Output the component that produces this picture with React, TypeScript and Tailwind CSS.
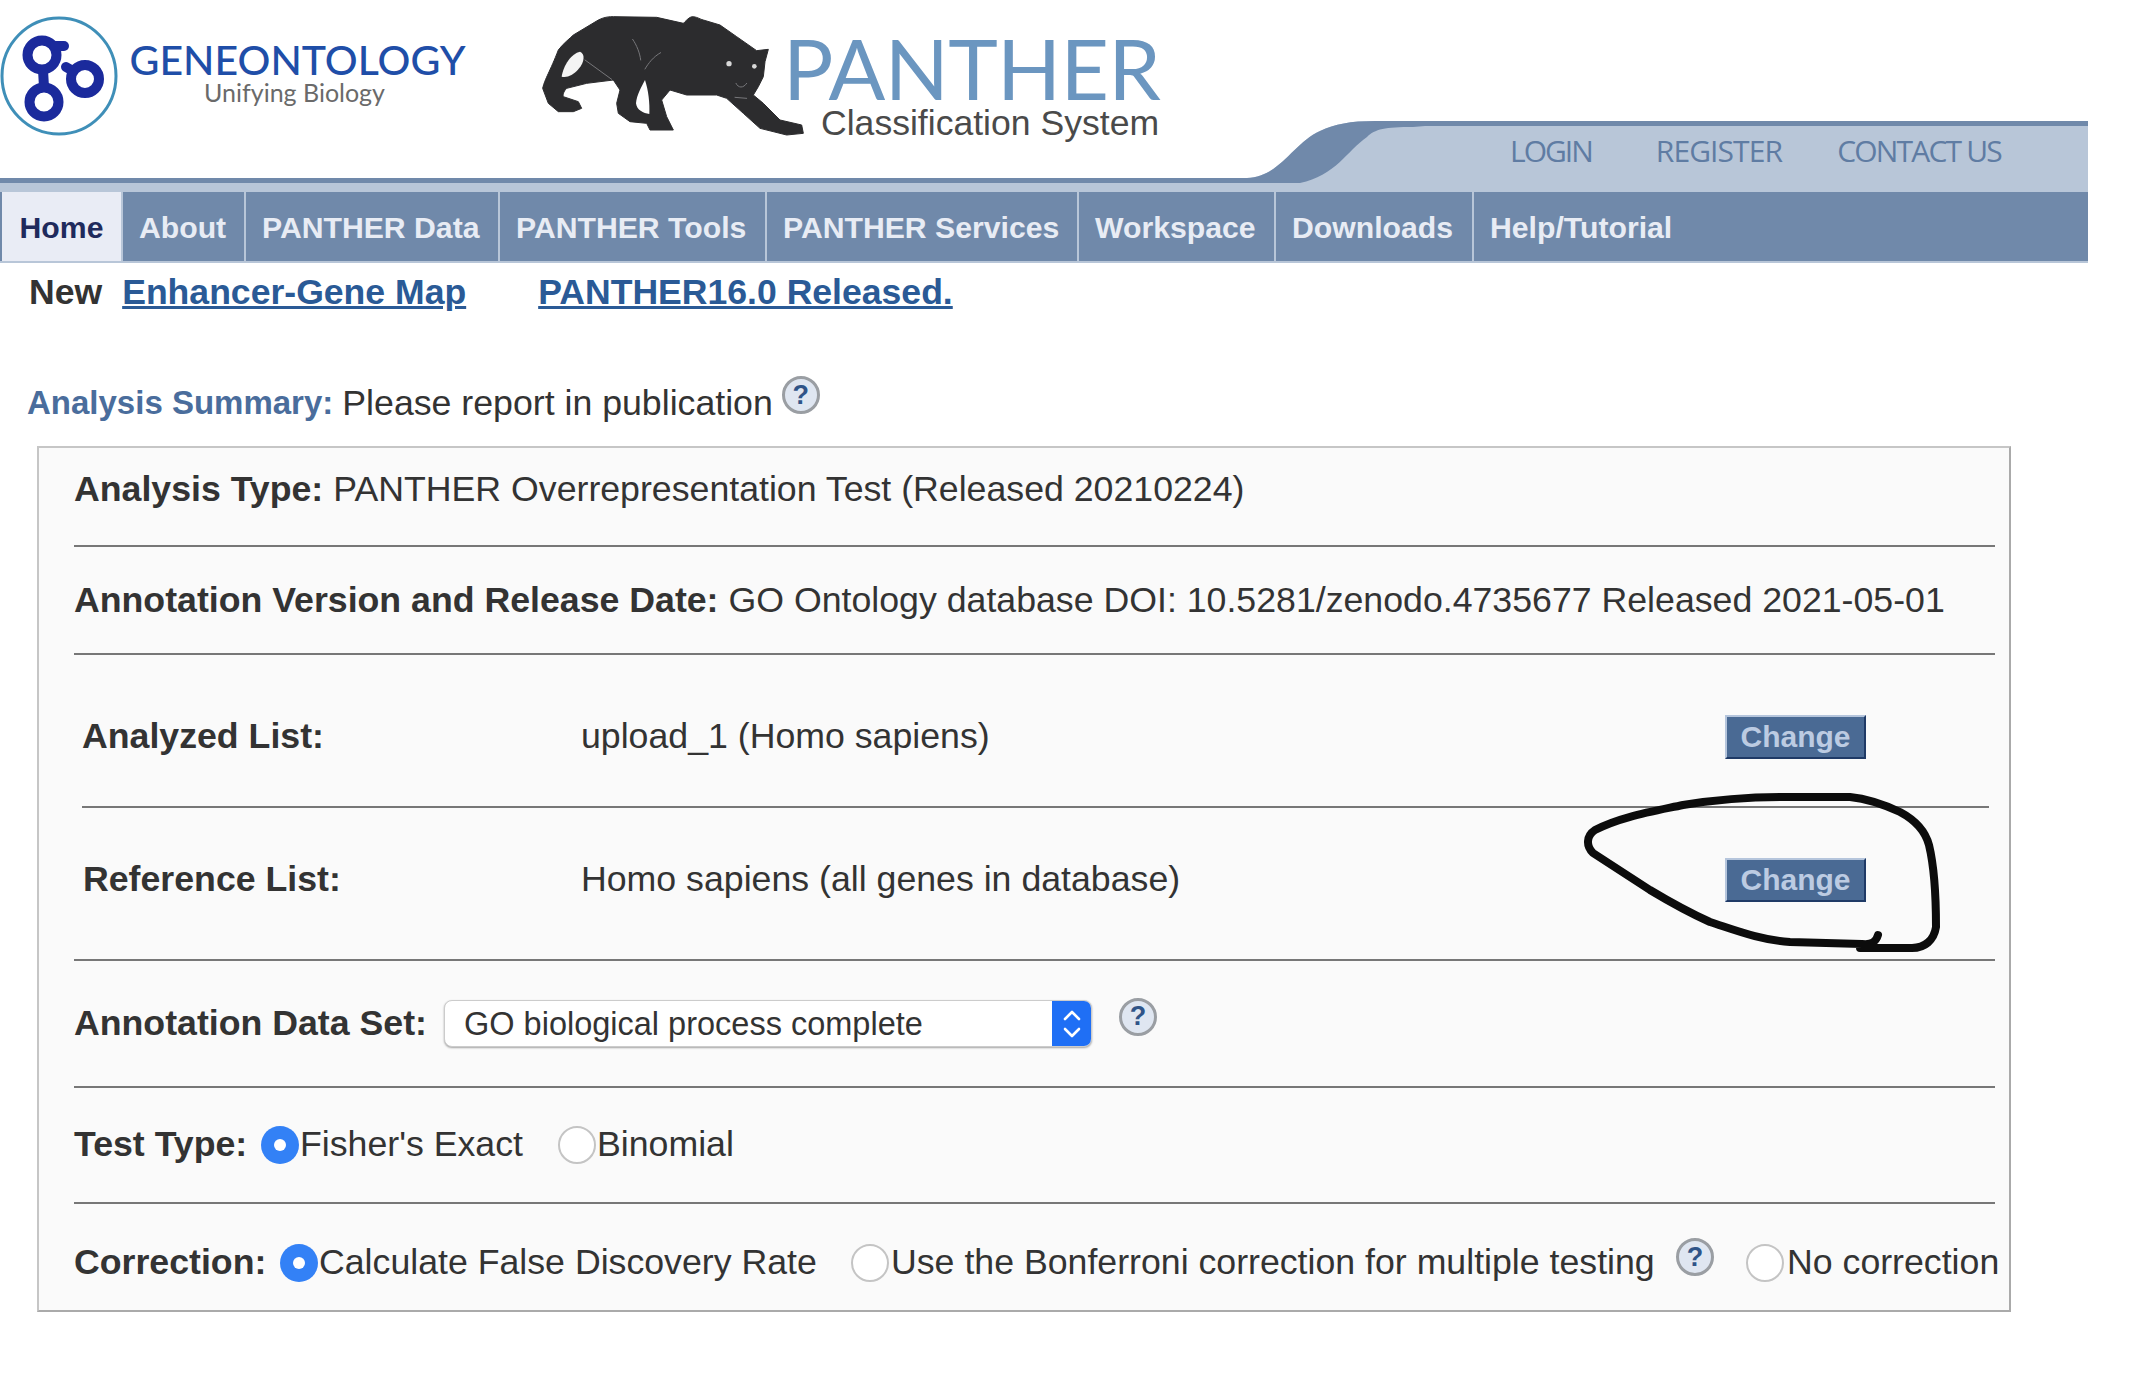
import React from 'react';

const navItems = [
  { label: 'About', w: 'w-[123px]' },
  { label: 'PANTHER Data', w: 'w-[254px]' },
  { label: 'PANTHER Tools', w: 'w-[267px]' },
  { label: 'PANTHER Services', w: 'w-[312px]' },
  { label: 'Workspace', w: 'w-[197px]' },
  { label: 'Downloads', w: 'w-[198px]' },
];

function GoLogo() {
  return (
    <svg viewBox="0 0 120 140" className="w-[120px] h-[140px] shrink-0">
      <ellipse cx="59" cy="76" rx="57" ry="58" fill="white" stroke="#3f8fb8" strokeWidth="3" />
      <g fill="none" stroke="#1b2a9c" strokeWidth="10" strokeLinecap="round">
        <circle cx="42" cy="55" r="14.5" />
        <circle cx="44" cy="102" r="14.5" />
        <circle cx="85" cy="79" r="14" />
        <path d="M43 70 L44 87" />
        <path d="M55 46 L64 46" />
        <path d="M66 67 L73 71" />
      </g>
    </svg>
  );
}

function PantherMark() {
  return (
    <svg viewBox="0 0 900 450" className="w-[300px] h-[150px] shrink-0">
      <path
        d="M38 265 C45 235 60 215 85 150 C100 130 120 115 130 105 L205 60 C225 50 240 50 250 50 L380 52 L460 70 C475 55 480 50 490 50 C505 52 510 58 520 60 L570 75 L620 110 L680 152 L715 148 L705 185 L700 230 L685 260 L670 285 L700 310 L750 360 L815 375 L820 400 L770 405 L690 385 L640 340 L590 295 L560 285 L470 285 L420 270 L395 300 L410 350 L430 390 L360 390 L350 370 L300 365 L265 340 L260 310 L270 270 L250 240 L170 250 L110 265 C100 275 98 285 100 290 L145 305 L155 325 L130 335 L85 335 L55 310 Z"
        fill="#2c2c2e"
        stroke="#2c2c2e"
        strokeWidth="3"
        strokeLinejoin="round"
      />
      <path d="M95 230 C100 195 125 160 150 155 C165 160 165 185 145 208 C130 225 110 235 95 230 Z" fill="#f4f4f4" />
      <path d="M345 240 C355 270 360 310 358 342 C340 340 320 330 318 310 C320 285 335 260 345 240 Z" fill="#fff" />
      <g fill="none" stroke="#77777a" strokeWidth="3" strokeLinecap="round">
        <path d="M165 180 L245 238" />
        <path d="M308 118 C320 135 330 160 332 180" />
        <path d="M392 158 C370 170 355 190 345 207" />
        <path d="M618 250 C625 265 640 265 650 250" />
        <path d="M615 292 L650 295" />
      </g>
      <circle cx="597" cy="191" r="8" fill="#d8d8d8" />
      <circle cx="673" cy="199" r="7" fill="#d8d8d8" />
    </svg>
  );
}

function Swoosh() {
  return (
    <svg viewBox="0 0 190 71" preserveAspectRatio="none" className="w-[190px] h-[71px] shrink-0 block">
      <path d="M0 57 L12 57 C45 56 58 22 85 10 C100 3 115 0 140 0 L190 0 L190 71 L0 71 Z" fill="#b8c6d8" />
      <path
        d="M0 57 L12 57 C45 56 58 22 85 10 C100 3 115 0 140 0 L190 0 L190 5 L178 6 C150 6 140 8 132 16 C112 30 100 55 65 62 L0 62 Z"
        fill="#7089aa"
      />
    </svg>
  );
}

function HelpIcon({ className = '' }: { className?: string }) {
  return (
    <span
      className={`flex items-center justify-center w-[38px] h-[38px] shrink-0 rounded-full border-[3px] border-[#9a9ea3] bg-[#dfe6f1] text-[#2f5488] text-[27px] font-bold leading-none ${className}`}
    >
      ?
    </span>
  );
}

function Radio({ checked = false }: { checked?: boolean }) {
  if (checked) {
    return (
      <span className="flex items-center justify-center w-[38px] h-[38px] shrink-0 rounded-full bg-[#3381f6]">
        <span className="w-[12px] h-[12px] rounded-full bg-white" />
      </span>
    );
  }
  return <span className="block w-[38px] h-[38px] shrink-0 rounded-full border-2 border-[#c4c4c4] bg-white" />;
}

function ChangeButton() {
  return (
    <button className="w-[141px] h-[44px] flex items-center justify-center bg-[#4a6a94] border-2 border-t-[#b5c5dc] border-l-[#b5c5dc] border-r-[#1f3a66] border-b-[#1f3a66] text-[#bccbe2] text-[30px] font-bold">
      Change
    </button>
  );
}

export default function App() {
  return (
    <div className="relative w-full h-[1373px] overflow-hidden bg-white text-[#333] font-['Liberation_Sans',Arial,sans-serif]">
      {/* header */}
      <div className="flex w-[2088px] h-[192px]">
        <div className="w-[1235px] shrink-0 flex flex-col">
          <div className="h-[178px] flex items-start">
            <GoLogo />
            <div className="ml-[9px] w-[337px] pt-[37px] flex flex-col items-center">
              <div className="text-[41px] leading-[46px] font-medium text-[#1f4ea8] font-['Lato',sans-serif]">GENEONTOLOGY</div>
              <div className="ml-[-6px] mt-[-6px] text-[25px] leading-[30px] text-[#6a6a6a] font-['Lato',sans-serif]">Unifying Biology</div>
            </div>
            <div className="ml-[64px]">
              <PantherMark />
            </div>
            <div className="ml-[-47px] pt-[32px] w-[380px]">
              <div className="text-[84px] leading-[72px] tracking-[-0.7px] text-[#6b96c0] font-['Lato',sans-serif]">PANTHER</div>
              <div className="ml-[38px] mt-[-1px] text-[35.6px] leading-[40px] text-[#4a4a4a]">Classification System</div>
            </div>
          </div>
          <div className="h-[5px] bg-[#7089aa]" />
          <div className="h-[9px] bg-[#b8c6d8]" />
        </div>
        <div className="self-end">
          <Swoosh />
        </div>
        <div className="flex-1 mt-[121px] bg-[#b8c6d8] border-t-[5px] border-[#7089aa] flex items-start">
          <div className="mt-[5px] ml-[85px] flex text-[30px] leading-[40px] text-[#5f7ca3] font-['Open_Sans',sans-serif]">
            <span className="tracking-[-2px]">LOGIN</span>
            <span className="ml-[64px] tracking-[-0.9px]">REGISTER</span>
            <span className="ml-[55px] tracking-[-1.8px]">CONTACT US</span>
          </div>
        </div>
      </div>

      {/* nav */}
      <div className="flex w-[2088px] h-[71px] pl-[2px] bg-[#7089aa] border-b-2 border-[#b8c6d8] text-[30.2px] font-bold">
        <div className="w-[119px] pt-[2px] flex items-center justify-center bg-[#e9ecf5] text-[#1f2a5c]">Home</div>
        {navItems.map((item) => (
          <div key={item.label} className={`${item.w} pl-[16px] pt-[2px] flex items-center text-[#e8ecf4] border-l-2 border-[#b8c6d8]`}>
            {item.label}
          </div>
        ))}
        <div className="pl-[16px] pt-[2px] flex items-center text-[#e8ecf4] border-l-2 border-[#b8c6d8]">Help/Tutorial</div>
      </div>

      {/* news */}
      <div className="flex pl-[29px] pt-[9px] text-[35.6px] leading-[40px] font-bold">
        <span>New</span>
        <a className="ml-[20px] text-[#2a5a96] underline">Enhancer-Gene Map</a>
        <a className="ml-[72px] text-[#2a5a96] underline">PANTHER16.0 Released.</a>
      </div>

      {/* summary */}
      <div className="flex items-start pl-[27px] mt-[69px] h-[46px] text-[35.7px] leading-[44px]">
        <span className="font-bold text-[33px] text-[#4a6d9c] mr-[9px]">Analysis Summary:</span>
        <span>Please report in publication</span>
        <HelpIcon className="ml-[9px] mt-[-5px]" />
      </div>

      {/* panel */}
      <div className="ml-[37px] mt-[19px] w-[1974px] h-[866px] pl-[35px] pr-[14px] bg-[#fafafa] border-2 border-[#c6c6c6] border-r-[#aaa] border-b-[#aaa] text-[35.7px]">
        <div className="h-[99px] pb-[13px] flex items-center border-b-2 border-[#777]">
          <span className="font-bold mr-[10px]">Analysis Type:</span>
          PANTHER Overrepresentation Test (Released 20210224)
        </div>
        <div className="h-[108px] pt-[1px] flex items-center border-b-2 border-[#777]">
          <span className="font-bold mr-[10px]">Annotation Version and Release Date:</span>
          GO Ontology database DOI: 10.5281/zenodo.4735677 Released 2021-05-01
        </div>
        <div className="ml-[8px] mr-[6px] h-[153px] pt-[12px] flex items-center border-b-2 border-[#777]">
          <span className="w-[499px] font-bold">Analyzed List:</span>
          <span className="w-[1144px]">upload_1 (Homo sapiens)</span>
          <ChangeButton />
        </div>
        <div className="h-[153px] pb-[8px] pl-[9px] flex items-center border-b-2 border-[#777]">
          <span className="w-[498px] font-bold">Reference List:</span>
          <span className="w-[1144px]">Homo sapiens (all genes in database)</span>
          <ChangeButton />
        </div>
        <div className="h-[127px] flex items-center border-b-2 border-[#777]">
          <span className="w-[370px] font-bold">Annotation Data Set:</span>
          <div className="flex w-[648px] h-[47px] rounded-[8px] overflow-hidden bg-white border border-[#ccc] shadow-[0_1px_2px_rgba(0,0,0,0.35)]">
            <span className="flex-1 pl-[19px] text-[32.5px] leading-[46px]">GO biological process complete</span>
            <span className="w-[39px] flex items-center justify-center bg-[#1f6ff5]">
              <svg viewBox="0 0 20 34" className="w-[20px] h-[34px]" fill="none" stroke="white" strokeWidth="2.6" strokeLinecap="round" strokeLinejoin="round">
                <path d="M3 12 L10 5 L17 12" />
                <path d="M3 22 L10 29 L17 22" />
              </svg>
            </span>
          </div>
          <HelpIcon className="ml-[27px] mt-[-14px]" />
        </div>
        <div className="h-[116px] flex items-center border-b-2 border-[#777]">
          <span className="w-[187px] font-bold">Test Type:</span>
          <Radio checked />
          <span className="w-[259px] pl-[1px]">Fisher's Exact</span>
          <Radio />
          <span className="pl-[1px]">Binomial</span>
        </div>
        <div className="h-[106px] pt-[12px] flex items-center whitespace-nowrap">
          <span className="w-[206px] shrink-0 font-bold">Correction:</span>
          <Radio checked />
          <span className="w-[533px] shrink-0 pl-[1px]">Calculate False Discovery Rate</span>
          <Radio />
          <span className="w-[787px] shrink-0 pl-[2px]">Use the Bonferroni correction for multiple testing</span>
          <HelpIcon className="mt-[-12px]" />
          <span className="w-[32px] shrink-0" />
          <Radio />
          <span className="shrink-0 pl-[3px]">No correction</span>
        </div>
      </div>

      {/* hand drawn circle over the second button */}
      <svg viewBox="0 0 450 210" className="absolute left-[1550px] top-[770px] w-[450px] h-[210px]" fill="none" stroke="#0c0c0c" strokeWidth="8" strokeLinecap="round" strokeLinejoin="round">
        <path d="M328 165 C326 172 322 175 312 174 L240 172 C210 170 185 160 160 152 C140 143 120 132 100 120 L43 83 C36 76 36 66 45 60 C70 47 100 42 133 35 C170 29 200 27 233 27 L300 27 C320 29 335 35 350 42 C365 50 375 60 379 75 C385 100 386 130 386 157 C384 170 375 178 362 178 L310 178" />
      </svg>
    </div>
  );
}
